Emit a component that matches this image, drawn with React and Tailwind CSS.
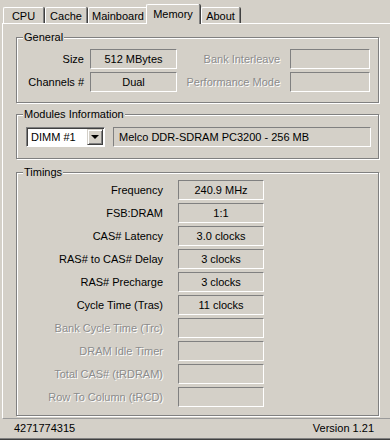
const tabs = [
  { name: 'CPU', w: 'w-[41px]', ml: 'ml-[3px]' },
  { name: 'Cache', w: 'w-[42px]', ml: 'ml-[1px]' },
  { name: 'Mainboard', w: 'w-[60px]', ml: 'ml-[1px]' },
  { name: 'Memory', w: 'w-[54px]', ml: 'ml-[-2px]', active: true },
  { name: 'About', w: 'w-[39px]', ml: 'ml-[1px]' },
];

const timings = [
  { label: 'Frequency', value: '240.9 MHz' },
  { label: 'FSB:DRAM', value: '1:1' },
  { label: 'CAS# Latency', value: '3.0 clocks' },
  { label: 'RAS# to CAS# Delay', value: '3 clocks' },
  { label: 'RAS# Precharge', value: '3 clocks' },
  { label: 'Cycle Time (Tras)', value: '11 clocks' },
  { label: 'Bank Cycle Time (Trc)', off: true },
  { label: 'DRAM Idle Timer', off: true },
  { label: 'Total CAS# (tRDRAM)', off: true },
  { label: 'Row To Column (tRCD)', off: true },
];

const dim = 'text-[#8c8c8c] [text-shadow:1px_1px_0_#ffffff]';

function Field({ className = '', children }) {
  return (
    <div className={`h-[20px] flex items-center justify-center border border-t-[#808080] border-l-[#808080] border-b-white border-r-white ${className}`}>
      {children}
    </div>
  );
}

function Group({ title, className = '', children }) {
  return (
    <div className={`relative w-[363px] border border-[#808080] shadow-[inset_1px_1px_0_#ffffff,1px_1px_0_#ffffff] ${className}`}>
      <span className="absolute left-[6px] top-[-8px] bg-[#d4d0c8] px-[1px] leading-[14px]">{title}</span>
      {children}
    </div>
  );
}

export default function App() {
  return (
    <div className="w-[390px] h-[440px] bg-[#d4d0c8] text-[11px] text-black overflow-hidden flex flex-col font-['Liberation_Sans',Arial,sans-serif] select-none">
      {/* tab strip */}
      <div className="h-[23px] flex items-end shrink-0">
        {tabs.map((t) =>
          t.active ? (
            <div
              key={t.name}
              className={`${t.w} ${t.ml} h-[20px] mb-[-1px] relative z-10 bg-[#d4d0c8] rounded-t-[2px] border-t border-l border-white border-r border-r-[#808080] shadow-[1px_0_0_#404040] flex justify-center pt-[3px] leading-[12px]`}
            >
              {t.name}
            </div>
          ) : (
            <div
              key={t.name}
              className={`${t.w} ${t.ml} h-[16px] rounded-t-[2px] border-t border-l border-white border-r border-r-[#808080] shadow-[1px_0_0_#404040] flex justify-center pt-[2px] leading-[12px]`}
            >
              {t.name}
            </div>
          )
        )}
      </div>

      {/* tab panel */}
      <div className="h-[396px] ml-[2px] border-t border-l border-white border-b border-b-[#9a9a9a] pl-[13px] pt-[13px] shrink-0">
        <Group title="General" className="h-[66px] pt-[11px]">
          <div className="flex flex-col gap-[3px]">
            <div className="flex items-center">
              <span className="w-[67px] text-right">Size</span>
              <Field className="w-[87px] ml-[6px]">512 MBytes</Field>
              <span className={`w-[103px] text-right ${dim}`}>Bank Interleave</span>
              <Field className="w-[80px] ml-[10px]" />
            </div>
            <div className="flex items-center">
              <span className="w-[67px] text-right">Channels #</span>
              <Field className="w-[87px] ml-[6px]">Dual</Field>
              <span className={`w-[103px] text-right ${dim}`}>Performance Mode</span>
              <Field className="w-[80px] ml-[10px]" />
            </div>
          </div>
        </Group>

        <Group title="Modules Information" className="h-[45px] mt-[11px] pt-[12px]">
          <div className="flex items-center pl-[9px]">
            <div className="w-[79px] h-[20px] bg-white flex items-center border border-t-[#808080] border-l-[#808080] border-b-white border-r-white shadow-[inset_1px_1px_0_#404040]">
              <span className="flex-1 pl-[4px] pt-[1px]">DIMM #1</span>
              <div className="w-[16px] h-[16px] mr-[1px] bg-[#d4d0c8] border border-t-[#d4d0c8] border-l-[#d4d0c8] border-b-[#404040] border-r-[#404040] shadow-[inset_1px_1px_0_#ffffff,inset_-1px_-1px_0_#808080] flex items-center justify-center">
                <div className="w-0 h-0 border-l-[4px] border-r-[4px] border-t-[4px] border-l-transparent border-r-transparent border-t-black" />
              </div>
            </div>
            <Field className="w-[258px] ml-[8px] !justify-start pl-[5px]">Melco DDR-SDRAM PC3200 - 256 MB</Field>
          </div>
        </Group>

        <Group title="Timings" className="h-[244px] mt-[13px] pt-[7px]">
          <div className="flex flex-col gap-[3px]">
            {timings.map((r) => (
              <div key={r.label} className="flex items-center">
                <span className={`w-[146px] text-right ${r.off ? dim : ''}`}>{r.label}</span>
                <Field className="w-[86px] ml-[15px]">{r.value}</Field>
              </div>
            ))}
          </div>
        </Group>
      </div>

      {/* status bar */}
      <div className="h-[19px] flex items-center justify-between pl-[14px] pr-[16px] shrink-0">
        <span>4271774315</span>
        <span>Version 1.21</span>
      </div>
      <div className="h-[2px] border-t border-[#808080] bg-[#404040] shrink-0" />
    </div>
  );
}
